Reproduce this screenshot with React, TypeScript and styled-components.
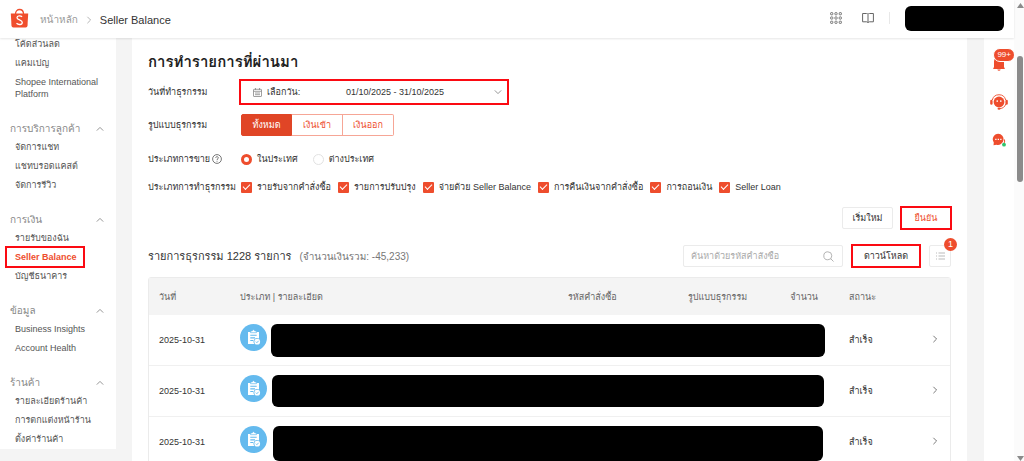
import React from "react";
import styled, { createGlobalStyle, css } from "styled-components";

const BRAND = "#ee4d2d";
const MARK = "#fb0a12";
const LINE = "#ebebeb";
const FONT = `"Liberation Sans", Arial, Loma, sans-serif`;

const GlobalStyle = createGlobalStyle`
  * { box-sizing: border-box; }
  body { margin: 0; overflow: hidden; font-family: ${FONT}; font-size: 9px; color: #333; background: #f4f4f4; }
  button, input { font-family: inherit; font-size: inherit; color: inherit; margin: 0; }
  a { color: inherit; text-decoration: none; }
`;

const marked = css`
  outline: 2px solid ${MARK};
`;

const Page = styled.div`
  display: flex;
  height: 100vh;
`;
const Screen = styled.div`
  flex: 1;
  min-width: 0;
  display: flex;
  flex-direction: column;
`;
const Header = styled.header`
  display: flex;
  align-items: center;
  flex: none;
  height: 38px;
  padding: 0 10px 2px;
  background: #fff;
  box-shadow: 0 1px 2px rgba(0, 0, 0, 0.1);
  z-index: 1;
`;
const Crumbs = styled.nav`
  display: flex;
  align-items: center;
  gap: 7px;
  flex: 1;
  margin-left: 11px;
  padding-top: 4px;
  font-size: 11px;
  line-height: 16px;
  a { color: #999; font-size: 10px; }
`;
const HeaderTools = styled.div`
  display: flex;
  align-items: center;
  gap: 20px;
`;
const IconButton = styled.button`
  display: flex;
  padding: 0;
  border: 0;
  background: none;
  color: #666;
`;
const Divider = styled.span`
  width: 1px;
  height: 12px;
  margin-left: -5px;
  margin-right: -5px;
  background: #e8e8e8;
`;
const Account = styled.div`
  width: 99px;
  height: 25px;
  border-radius: 6px;
  background: #000;
`;

const Body = styled.div`
  display: flex;
  flex: 1;
  min-height: 0;
  gap: 16px;
  overflow: hidden;
`;
const Sidebar = styled.nav`
  align-self: flex-start;
  flex: none;
  width: 116px;
  margin-top: -3px;
  background: #fff;
`;
const Group = styled.section`
  & + & { margin-top: 15px; }
`;
const GroupTitle = styled.button`
  display: flex;
  align-items: center;
  justify-content: space-between;
  width: 100%;
  height: 19px;
  padding: 0 12px 0 10px;
  border: 0;
  background: none;
  color: #888;
  font-size: 10px;
`;
const Links = styled.ul`
  margin: 0;
  padding: 0;
  list-style: none;
`;
const NavItem = styled.li`
  padding: 3px 12px 4px 15px;
  line-height: 12px;
  color: #555;
`;
const NavLink = styled.a<{ $active?: boolean }>`
  display: block;
  ${(p) =>
    p.$active &&
    css`
      ${marked}
      outline-offset: 3px;
      margin-left: -5px;
      padding-left: 5px;
      margin-right: 24px;
      white-space: nowrap;
      color: ${BRAND};
      font-weight: bold;
    `}
`;

const Main = styled.main`
  flex: 1;
  min-width: 0;
  margin-right: 1px;
  padding: 14px 16px 0;
  background: #fff;
`;
const Title = styled.h1`
  margin: 0 0 7px;
  font-size: 15px;
  line-height: 20px;
  color: #222;
`;
const FilterRow = styled.div<{ $height: number; $gap: number }>`
  display: flex;
  align-items: center;
  height: ${(p) => p.$height}px;
  margin-bottom: ${(p) => p.$gap}px;
`;
const FilterLabel = styled.span`
  display: flex;
  align-items: center;
  gap: 2px;
  flex: none;
  width: 93px;
  white-space: nowrap;
`;
const DatePicker = styled.button`
  ${marked}
  display: flex;
  align-items: center;
  width: 266px;
  height: 22px;
  padding: 0 5px 0 12px;
  border: 0;
  background: #fff;
  text-align: left;
`;
const DateCaption = styled.span`
  width: 79px;
  margin-left: 5px;
`;
const DateRange = styled.span`
  flex: 1;
`;
const Segments = styled.div`
  display: flex;
`;
const Segment = styled.button<{ $on?: boolean }>`
  width: 51px;
  height: 22px;
  padding: 0;
  border: 1px solid ${(p) => (p.$on ? "#e04526" : "#f6a696")};
  background: ${(p) => (p.$on ? "#e04526" : "#fff")};
  color: ${(p) => (p.$on ? "#fff" : BRAND)};
  & + & { border-left-width: 0; }
  &:first-child { border-radius: 2px 0 0 2px; }
  &:last-child { border-radius: 0 2px 2px 0; }
`;
const Options = styled.div<{ $gap: number }>`
  display: flex;
  align-items: center;
  gap: ${(p) => p.$gap}px;
`;
const Option = styled.label`
  display: flex;
  align-items: center;
  gap: 5px;
  white-space: nowrap;
`;
const Radio = styled.input.attrs({ type: "radio" })`
  appearance: none;
  width: 11px;
  height: 11px;
  border: 1px solid #e2e2e2;
  border-radius: 50%;
  background: #fff;
  &:checked { border: 3px solid ${BRAND}; }
`;
const Check = styled.input.attrs({ type: "checkbox" })`
  appearance: none;
  display: grid;
  place-items: center;
  width: 11px;
  height: 11px;
  border-radius: 1px;
  background: ${BRAND};
  &::after {
    content: "";
    width: 6px;
    height: 3px;
    margin-bottom: 2px;
    border: solid #fff;
    border-width: 0 0 1px 1px;
    transform: rotate(-45deg);
  }
`;
const Actions = styled.div`
  display: flex;
  justify-content: flex-end;
  gap: 8px;
`;
const Button = styled.button<{ $width: number; $primary?: boolean; $marked?: boolean }>`
  flex: none;
  width: ${(p) => p.$width}px;
  height: 22px;
  padding: 0;
  border: 1px solid ${LINE};
  border-radius: 2px;
  background: #fff;
  color: ${(p) => (p.$primary ? BRAND : "#333")};
  ${(p) =>
    p.$marked &&
    css`
      ${marked}
      outline-offset: -1px;
      border-radius: 0;
    `}
`;
const Toolbar = styled.div`
  display: flex;
  align-items: center;
  gap: 9px;
  margin: 16px 0 10px;
`;
const Summary = styled.h2`
  flex: 1;
  margin: 0;
  font-size: 11px;
  font-weight: normal;
  line-height: 16px;
  white-space: nowrap;
  small {
    margin-left: 8px;
    font-size: 10px;
    color: #777;
  }
`;
const Search = styled.label`
  display: flex;
  align-items: center;
  width: 160px;
  height: 22px;
  padding: 0 8px 0 7px;
  border: 1px solid ${LINE};
  border-radius: 2px;
  color: #bbb;
  input {
    flex: 1;
    min-width: 0;
    padding: 0;
    border: 0;
    outline: 0;
    background: none;
    color: #333;
  }
  input::placeholder { color: #aaa; }
`;
const ListButton = styled.button`
  position: relative;
  display: grid;
  place-items: center;
  width: 22px;
  height: 22px;
  padding: 0;
  border: 1px solid ${LINE};
  border-radius: 2px;
  background: #fff;
  color: #aaa;
`;
const Count = styled.span`
  position: absolute;
  top: -8px;
  right: -7px;
  width: 13px;
  height: 13px;
  border-radius: 50%;
  background: ${BRAND};
  color: #fff;
  font-size: 9px;
  line-height: 13px;
  text-align: center;
`;

const Table = styled.table`
  width: 100%;
  table-layout: fixed;
  border-collapse: separate;
  border-spacing: 0;
  border: 1px solid ${LINE};
  border-radius: 3px 3px 0 0;
`;
const Th = styled.th<{ $width?: number; $right?: boolean }>`
  width: ${(p) => (p.$width ? `${p.$width}px` : "auto")};
  height: 37px;
  padding: 0 ${(p) => (p.$right ? 21 : 0)}px 0 10px;
  background: #f4f4f4;
  color: #666;
  font-weight: normal;
  text-align: ${(p) => (p.$right ? "right" : "left")};
  white-space: nowrap;
`;
const Td = styled.td`
  height: 51px;
  padding: 0 0 0 10px;
  border-bottom: 1px solid #f0f0f0;
  white-space: nowrap;
`;
const Detail = styled.div`
  display: flex;
  align-items: flex-start;
  gap: 4px;
  height: 33px;
  padding-right: 14px;
`;
const TypeIcon = styled.span`
  display: grid;
  place-items: center;
  flex: none;
  width: 27px;
  height: 27px;
  border-radius: 50%;
  background: #64baee;
`;
const Redacted = styled.div<{ $height: number; $inset: number }>`
  flex: 1;
  height: ${(p) => p.$height}px;
  margin: 0 ${(p) => p.$inset}px;
  border-radius: 6px;
  background: #000;
`;

const Rail = styled.aside`
  display: flex;
  flex-direction: column;
  align-items: center;
  gap: 21px;
  flex: none;
  width: 30px;
  padding-top: 17px;
  background: #fff;
  color: ${BRAND};
`;
const RailButton = styled.button`
  position: relative;
  display: grid;
  place-items: center;
  width: 18px;
  height: 17px;
  padding: 0;
  border: 0;
  background: none;
  color: inherit;
`;
const Badge = styled.span`
  position: absolute;
  top: -7px;
  right: -7px;
  padding: 0 3px;
  border: 1px solid #fff;
  border-radius: 7px;
  background: ${BRAND};
  color: #fff;
  font-size: 8px;
  line-height: 12px;
`;
const Scrollbar = styled.div`
  display: flex;
  flex-direction: column;
  align-items: center;
  justify-content: space-between;
  flex: none;
  width: 10px;
  padding: 3px 0 0 2px;
  background: #fbfbfb;
`;
const Thumb = styled.div`
  width: 6px;
  height: 126px;
  margin: 48px 0 auto;
  border-radius: 3px;
  background: #8b8b8b;
`;

function Chevron({ dir, size = 8, color = "#888" }: { dir: "up" | "down" | "right"; size?: number; color?: string }) {
  const d = { up: "M1 7l4-4 4 4", down: "M1 3l4 4 4-4", right: "M3 1l4 4-4 4" }[dir];
  return (
    <svg width={size} height={size} viewBox="0 0 10 10" fill="none" stroke={color} strokeWidth="1.1">
      <path d={d} />
    </svg>
  );
}

const Logo = () => (
  <svg width="19" height="20" viewBox="0 0 18 20">
    <path d="M5 6c0-6 8-6 8 0" fill="none" stroke="#f04e2d" strokeWidth="1.3" />
    <path d="M0.3 5.5h17.4l-.7 12.3q-.1 1.7-1.8 1.7H2.8q-1.7 0-1.8-1.7z" fill="#f04e2d" />
    <path
      d="M11.6 8.7C10.3 7.6 6.6 7.2 6.5 9.7c0 2.5 5.4 1.9 5.3 4.7-.1 2.7-4 2.6-5.8.9"
      fill="none"
      stroke="#fff"
      strokeWidth="1.3"
    />
  </svg>
);

const STEPS = [1.7, 6, 10.3];
const AppsIcon = () => (
  <svg width="12" height="12" viewBox="0 0 12 12" fill="none" stroke="currentColor" strokeWidth="0.9">
    {STEPS.map((y) =>
      STEPS.map((x) => <rect key={`${x}-${y}`} x={x - 1.1} y={y - 1.1} width="2.2" height="2.2" rx="0.6" />)
    )}
  </svg>
);

const BookIcon = () => (
  <svg width="12" height="12" viewBox="0 0 12 12" fill="none" stroke="currentColor" strokeWidth="1">
    <path d="M6 2.3Q5.5 1.5 4.5 1.5H.6v8.3h4Q5.6 9.8 6 10.7 6.4 9.8 7.4 9.8h4V1.5H7.5Q6.5 1.5 6 2.3zV10.7" />
  </svg>
);

const CalendarIcon = () => (
  <svg width="9" height="9" viewBox="0 0 9 9" fill="none" stroke="#888" strokeWidth="0.8">
    <rect x="0.5" y="1.3" width="8" height="7.2" rx="0.5" />
    <path d="M.5 3.3h8M2.5 0v2M6.5 0v2M2 5h5M2 6.7h5" />
  </svg>
);

const HelpIcon = () => (
  <svg width="10" height="10" viewBox="0 0 10 10" fill="none" stroke="#555" strokeWidth="0.8">
    <circle cx="5" cy="5" r="4.4" />
    <path d="M3.7 4c0-1.8 2.7-1.7 2.6-.1C6.3 4.9 5 4.9 5 6M5 6.8v.9" />
  </svg>
);

const SearchIcon = () => (
  <svg width="11" height="11" viewBox="0 0 11 11" fill="none" stroke="#aaa" strokeWidth="0.9">
    <circle cx="4.8" cy="4.8" r="4" />
    <path d="M7.7 7.7l2.8 2.8" />
  </svg>
);

const ListIcon = () => (
  <svg width="9" height="8" viewBox="0 0 9 8" stroke="currentColor" strokeWidth="0.8">
    <path d="M0 1h1M2.5 1H9M0 4h1M2.5 4H9M0 7h1M2.5 7H9" />
  </svg>
);

const OrderIcon = () => (
  <svg width="15" height="17" viewBox="0 0 15 17">
    <path d="M2 3h11v6.5a3.6 3.6 0 0 0-4.500 5.500H2z" fill="#fff" />
    <path d="M4.5 3.7V2h1.7a1.3 1.3 0 0 1 2.6 0h1.7v1.7z" fill="#fff" stroke="#64baee" strokeWidth="0.7" />
    <path d="M4.3 6.3h6.4M4.3 8.9h4.7M4.3 11.5h3" stroke="#64baee" strokeWidth="1.1" />
    <circle cx="11.2" cy="12.7" r="2.9" fill="#fff" />
    <path d="M9.9 12.7l1 1 1.7-1.9" fill="none" stroke="#64baee" strokeWidth="0.9" />
  </svg>
);

const BellIcon = () => (
  <svg width="12" height="15" viewBox="0 0 12 15" fill="currentColor">
    <path d="M1 5.5a5 5 0 0 1 10 0v5.8l.7.7v.9H.3V12l.7-.7zM4.3 13.5h3.4q-.4 1.3-1.7 1.3t-1.7-1.3z" />
  </svg>
);

const AgentIcon = () => (
  <svg width="18" height="16" viewBox="0 0 18 16" fill="currentColor">
    <circle cx="9" cy="8" r="5.4" />
    <path d="M2.3 6a6.9 6.9 0 0 1 13.4 0M15.8 10q-1.5 4.4-6 4.6" fill="none" stroke="currentColor" strokeWidth="0.9" />
    <rect x="0.2" y="5.7" width="2.4" height="5" rx="1.2" />
    <rect x="15.4" y="5.7" width="2.4" height="5" rx="1.2" />
    <ellipse cx="9" cy="14.7" rx="1.5" ry="1" />
    <path d="M7.2 6.3v1.7M10.8 6.3v1.7" stroke="#fff" strokeWidth="1.2" />
  </svg>
);

const ChatIcon = () => (
  <svg width="14" height="14" viewBox="0 0 14 14">
    <path d="M6.3.7a5.6 5.6 0 1 1-1.8 11L1.5 12.3l.3-2.8A5.6 5.6 0 0 1 6.3.7z" fill="#ee4d2d" />
    <path d="M12.5 6.5q1 2.5-1.5 5" stroke="#ee4d2d" strokeWidth="1" fill="none" />
    <path d="M3.2 6.3h1.3M5.7 6.3H7M8.2 6.3h1.3" stroke="#fff" strokeWidth="1.2" />
    <circle cx="12" cy="11.7" r="1.9" fill="#2fc46c" />
  </svg>
);

const Triangle = ({ down }: { down?: boolean }) => (
  <svg width="7" height="5" viewBox="0 0 7 5">
    <path d={down ? "M0 0h7L3.5 5z" : "M0 5h7L3.5 0z"} fill="#8b8b8b" />
  </svg>
);

const groups: { title?: string; items: string[] }[] = [
  { items: ["โค้ดส่วนลด", "แคมเปญ", "Shopee International Platform"] },
  { title: "การบริการลูกค้า", items: ["จัดการแชท", "แชทบรอดแคสต์", "จัดการรีวิว"] },
  { title: "การเงิน", items: ["รายรับของฉัน", "Seller Balance", "บัญชีธนาคาร"] },
  { title: "ข้อมูล", items: ["Business Insights", "Account Health"] },
  { title: "ร้านค้า", items: ["รายละเอียดร้านค้า", "การตกแต่งหน้าร้าน", "ตั้งค่าร้านค้า"] },
];

const kinds = [
  "รายรับจากคำสั่งซื้อ",
  "รายการปรับปรุง",
  "จ่ายด้วย Seller Balance",
  "การคืนเงินจากคำสั่งซื้อ",
  "การถอนเงิน",
  "Seller Loan",
];

const rows = [
  { date: "2025-10-31", status: "สำเร็จ", height: 33, inset: 0 },
  { date: "2025-10-31", status: "สำเร็จ", height: 32, inset: 1 },
  { date: "2025-10-31", status: "สำเร็จ", height: 35, inset: 2 },
];

export default function App() {
  return (
    <Page>
      <GlobalStyle />
      <Screen>
        <Header>
          <Logo />
          <Crumbs>
            <a href="#home">หน้าหลัก</a>
            <Chevron dir="right" color="#aaa" />
            <span>Seller Balance</span>
          </Crumbs>
          <HeaderTools>
            <IconButton aria-label="Apps"><AppsIcon /></IconButton>
            <IconButton aria-label="Guide"><BookIcon /></IconButton>
            <Divider />
            <Account />
          </HeaderTools>
        </Header>
        <Body>
          <Sidebar>
            {groups.map((g, i) => (
              <Group key={i}>
                {g.title && (
                  <GroupTitle>
                    {g.title}
                    <Chevron dir="up" />
                  </GroupTitle>
                )}
                <Links>
                  {g.items.map((t) => (
                    <NavItem key={t}>
                      <NavLink href="#menu" $active={t === "Seller Balance"}>{t}</NavLink>
                    </NavItem>
                  ))}
                </Links>
              </Group>
            ))}
          </Sidebar>
          <Main>
            <Title>การทำรายการที่ผ่านมา</Title>
            <FilterRow $height={26} $gap={9}>
              <FilterLabel>วันที่ทำธุรกรรม</FilterLabel>
              <DatePicker>
                <CalendarIcon />
                <DateCaption>เลือกวัน:</DateCaption>
                <DateRange>01/10/2025 - 31/10/2025</DateRange>
                <Chevron dir="down" />
              </DatePicker>
            </FilterRow>
            <FilterRow $height={22} $gap={17}>
              <FilterLabel>รูปแบบธุรกรรม</FilterLabel>
              <Segments>
                <Segment $on>ทั้งหมด</Segment>
                <Segment>เงินเข้า</Segment>
                <Segment>เงินออก</Segment>
              </Segments>
            </FilterRow>
            <FilterRow $height={12} $gap={16}>
              <FilterLabel>
                ประเภทการขาย <HelpIcon />
              </FilterLabel>
              <Options $gap={15}>
                <Option><Radio name="region" defaultChecked />ในประเทศ</Option>
                <Option><Radio name="region" />ต่างประเทศ</Option>
              </Options>
            </FilterRow>
            <FilterRow $height={12} $gap={14}>
              <FilterLabel>ประเภทการทำธุรกรรม</FilterLabel>
              <Options $gap={7}>
                {kinds.map((k) => (
                  <Option key={k}><Check defaultChecked />{k}</Option>
                ))}
              </Options>
            </FilterRow>
            <Actions>
              <Button $width={51}>เริ่มใหม่</Button>
              <Button $width={50} $primary $marked>ยืนยัน</Button>
            </Actions>
            <Toolbar>
              <Summary>
                รายการธุรกรรม 1228 รายการ<small>(จำนวนเงินรวม: -45,233)</small>
              </Summary>
              <Search>
                <input aria-label="ค้นหา" placeholder="ค้นหาด้วยรหัสคำสั่งซื้อ" />
                <SearchIcon />
              </Search>
              <Button $width={68} $marked>ดาวน์โหลด</Button>
              <ListButton aria-label="Reports">
                <ListIcon />
                <Count>1</Count>
              </ListButton>
            </Toolbar>
            <Table>
              <thead>
                <tr>
                  <Th $width={81}>วันที่</Th>
                  <Th>ประเภท | รายละเอียด</Th>
                  <Th $width={120}>รหัสคำสั่งซื้อ</Th>
                  <Th $width={82}>รูปแบบธุรกรรม</Th>
                  <Th $width={79} $right>จำนวน</Th>
                  <Th $width={82}>สถานะ</Th>
                  <Th $width={29} />
                </tr>
              </thead>
              <tbody>
                {rows.map((r, i) => (
                  <tr key={i}>
                    <Td>{r.date}</Td>
                    <Td colSpan={4}>
                      <Detail>
                        <TypeIcon><OrderIcon /></TypeIcon>
                        <Redacted $height={r.height} $inset={r.inset} />
                      </Detail>
                    </Td>
                    <Td>{r.status}</Td>
                    <Td>
                      <Chevron dir="right" color="#666" />
                    </Td>
                  </tr>
                ))}
              </tbody>
            </Table>
          </Main>
          <Rail>
            <RailButton aria-label="Notifications"><BellIcon /><Badge>99+</Badge></RailButton>
            <RailButton aria-label="Support"><AgentIcon /></RailButton>
            <RailButton aria-label="Chat"><ChatIcon /></RailButton>
          </Rail>
        </Body>
      </Screen>
      <Scrollbar>
        <Triangle />
        <Thumb />
        <Triangle down />
      </Scrollbar>
    </Page>
  );
}
